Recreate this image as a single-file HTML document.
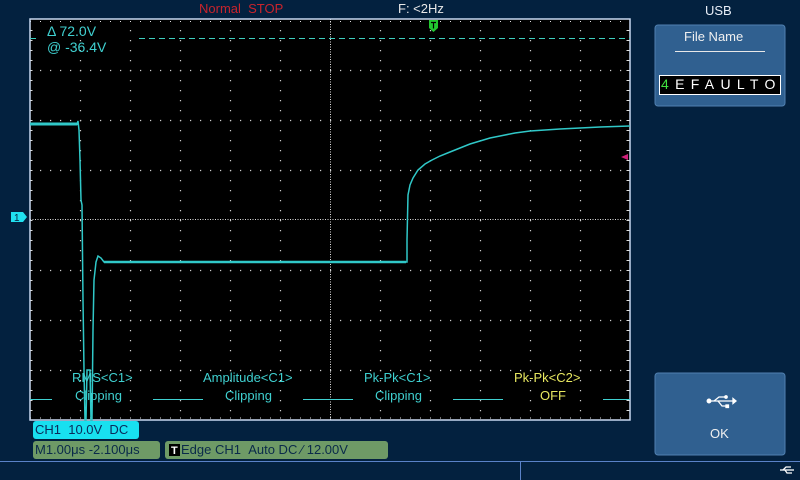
<!DOCTYPE html>
<html><head><meta charset="utf-8"><style>
body{margin:0;width:800px;height:480px;background:#03213f;position:relative;overflow:hidden;font-family:"Liberation Sans",sans-serif;}
.t{position:absolute;white-space:nowrap;font-size:13px;line-height:14px;}
.m{color:#3fd0d0;}
</style></head><body>
<div class="t" style="left:199px;top:2px;color:#c8242c;font-size:13px;">Normal&nbsp; STOP</div>
<div class="t" style="left:398px;top:2px;color:#e8e8e8;">F: &lt;2Hz</div>
<div class="t" style="left:705px;top:4px;color:#e8eef8;font-size:13px;">USB</div>

<svg style="position:absolute;left:0;top:0" width="800" height="480">
<rect x="30" y="19" width="600" height="401" fill="#000"/>
<g stroke="#cfcfcf" stroke-width="1.2" stroke-dasharray="1.2 8.8">
<line x1="40" y1="70.5" x2="630" y2="70.5"/><line x1="40" y1="120.5" x2="630" y2="120.5"/><line x1="40" y1="170.5" x2="630" y2="170.5"/>
<line x1="40" y1="270.5" x2="630" y2="270.5"/><line x1="40" y1="320.5" x2="630" y2="320.5"/><line x1="40" y1="370.5" x2="630" y2="370.5"/>
<line x1="80.5" y1="30" x2="80.5" y2="420"/><line x1="130.5" y1="30" x2="130.5" y2="420"/><line x1="180.5" y1="30" x2="180.5" y2="420"/><line x1="230.5" y1="30" x2="230.5" y2="420"/><line x1="280.5" y1="30" x2="280.5" y2="420"/>
<line x1="380.5" y1="30" x2="380.5" y2="420"/><line x1="430.5" y1="30" x2="430.5" y2="420"/><line x1="480.5" y1="30" x2="480.5" y2="420"/><line x1="530.5" y1="30" x2="530.5" y2="420"/><line x1="580.5" y1="30" x2="580.5" y2="420"/>
</g>
<g stroke="#dddddd" stroke-width="1" stroke-dasharray="1 1.5">
<line x1="30" y1="219.5" x2="630" y2="219.5"/><line x1="330.5" y1="19" x2="330.5" y2="420"/>
</g>
<g stroke="#ddd" stroke-width="1" stroke-dasharray="1 9">
<line x1="30" y1="21.5" x2="630" y2="21.5"/>
<line x1="30" y1="418" x2="630" y2="418"/>
<line x1="31" y1="30" x2="31" y2="420" stroke-width="3"/>
<line x1="628" y1="30" x2="628" y2="420" stroke-width="3"/>
</g>
<rect x="30" y="19" width="600" height="401" fill="none" stroke="#c8d8f0" stroke-width="1.5"/>
<line x1="139" y1="38.5" x2="630" y2="38.5" stroke="#3fd0c0" stroke-width="1" stroke-dasharray="6 4"/>
<line x1="30" y1="38.5" x2="36" y2="38.5" stroke="#3fd0c0" stroke-width="1"/>
<g stroke="#3fd0d0" stroke-width="1">
<line x1="30" y1="399.5" x2="52" y2="399.5"/><line x1="153" y1="399.5" x2="203" y2="399.5"/><line x1="303" y1="399.5" x2="353" y2="399.5"/><line x1="453" y1="399.5" x2="503" y2="399.5"/><line x1="603" y1="399.5" x2="630" y2="399.5"/>
</g>
<polyline fill="none" stroke="#30c8c8" stroke-width="1.5" points="30,124.5 77,124.5 78,121 79,130 80,160 81,200 82,205 83,300 84,370 85,420 86,420 87,370 90,370 91,420 92,420 93,330 94,280 96,262 98,256 101,258 104,262 406,262 407,262 407,240 408,195 410,185 413,178 418,170 425,164 432,160 440,156 450,152 460,148 470,144 480,141 490,138 500,136 515,133 530,131 545,130 560,129 580,128 600,127 630,126"/>
<line x1="30" y1="124" x2="77" y2="124" stroke="#30c8c8" stroke-width="3"/>
<line x1="104" y1="262" x2="406" y2="262" stroke="#30c8c8" stroke-width="2.5"/>
<path d="M429 20h9v8l-4.5 4-4.5-4z" fill="#22c830"/>
<path d="M431 22.5h5M433.5 22.5v6" stroke="#000" stroke-width="1.2"/>
<path d="M621 157l7-3v6z" fill="#d0207a"/>
<path d="M11 212h12l4 5-4 5h-12z" fill="#20e0f0"/>
<text x="14" y="221" font-size="10" fill="#03213f" font-family="Liberation Sans">1</text>
<line x1="0" y1="461.5" x2="800" y2="461.5" stroke="#5a82c8" stroke-width="1"/>
<line x1="520.5" y1="462" x2="520.5" y2="480" stroke="#5a82c8" stroke-width="1"/>
<rect x="655" y="25" width="130" height="81" rx="3" fill="#306090" stroke="#5080b0"/>
<line x1="675" y1="51.5" x2="765" y2="51.5" stroke="#e8e8e8" stroke-width="1"/>
<rect x="659.5" y="75.5" width="121" height="19" fill="#000" stroke="#fff" stroke-width="1"/>
<rect x="655" y="373" width="130" height="82" rx="3" fill="#306090" stroke="#5080b0"/>
<g stroke="#fff" fill="#fff" stroke-width="1.3">
<line x1="709" y1="401" x2="733" y2="401"/><circle cx="709" cy="401" r="1.8"/><path d="M733 398.5v5l3-2.5z"/>
<path d="M714 401l5-4h6" fill="none"/><circle cx="726" cy="397" r="1.2"/>
<path d="M718 401l4 5h5" fill="none"/><rect x="726" y="405" width="2.5" height="2.5"/>
<line x1="780" y1="470" x2="794" y2="470"/><path d="M783 470l3-3h5M785 470l2 3h5" fill="none"/>
</g>
<rect x="33" y="421" width="106" height="18" rx="3" fill="#18e0f0"/>
<rect x="33" y="441" width="127" height="18" rx="3" fill="#6e9a66"/>
<rect x="165" y="441" width="223" height="18" rx="3" fill="#6e9a66"/>
<rect x="169" y="444" width="11" height="12" fill="#000"/>
<text x="171" y="454" font-size="11" fill="#fff" font-weight="bold" font-family="Liberation Sans">T</text>
</svg>

<div class="t m" style="left:47px;top:24px;font-size:14px;">Δ 72.0V</div>
<div class="t m" style="left:47px;top:40px;font-size:14px;">@ -36.4V</div>

<div class="t m" style="left:72px;top:371px;">RMS&lt;C1&gt;</div>
<div class="t m" style="left:75px;top:389px;">Clipping</div>
<div class="t m" style="left:203px;top:371px;">Amplitude&lt;C1&gt;</div>
<div class="t m" style="left:225px;top:389px;">Clipping</div>
<div class="t m" style="left:364px;top:371px;">Pk-Pk&lt;C1&gt;</div>
<div class="t m" style="left:375px;top:389px;">Clipping</div>
<div class="t" style="left:514px;top:371px;color:#e8e860;">Pk-Pk&lt;C2&gt;</div>
<div class="t" style="left:540px;top:389px;color:#e8e860;">OFF</div>

<div class="t" style="left:35px;top:423px;color:#0a2a5a;">CH1 &nbsp;10.0V &nbsp;DC</div>
<div class="t" style="left:35px;top:443px;color:#0a2a4a;">M1.00μs -2.100μs</div>
<div class="t" style="left:181px;top:443px;color:#0a2a4a;">Edge CH1 &nbsp;Auto DC ⁄ 12.00V</div>

<div class="t" style="left:684px;top:30px;color:#f0f0f0;">File Name</div>
<div class="t" style="left:661px;top:77px;color:#fff;font-size:14px;letter-spacing:6.3px;"><span style="color:#40e040">4</span>EFAULTO</div>
<div class="t" style="left:710px;top:427px;color:#f0f0f0;">OK</div>
</body></html>
